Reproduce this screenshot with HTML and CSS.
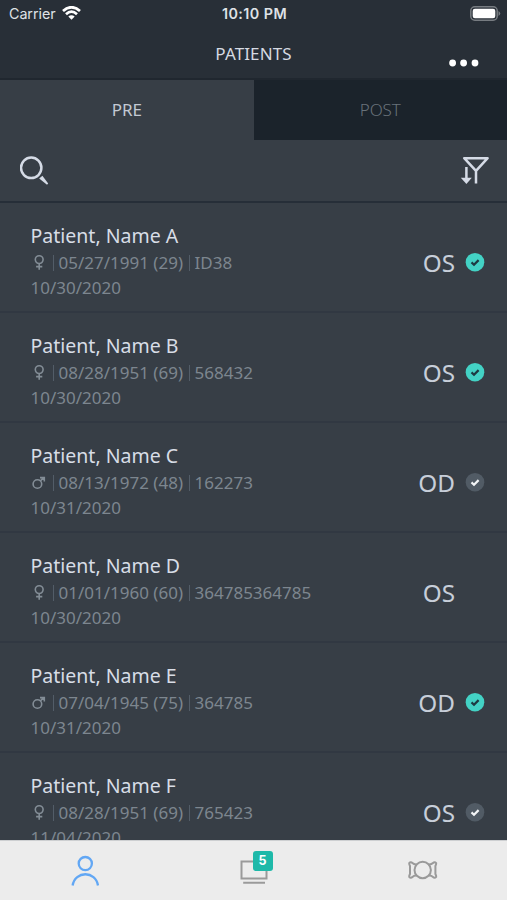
FILE: index.html
```html
<!DOCTYPE html>
<html lang="en">
<head>
<meta charset="utf-8">
<title>Patients</title>
<link rel="stylesheet" href="styles.css">
</head>
<body>
<svg class="defs" aria-hidden="true">
  <symbol id="female" viewBox="0 0 14 18"><circle cx="7.2" cy="5.6" r="3.9"/><path d="M7.2 9.5V15.8M4.1 12.6H10.3"/></symbol>
  <symbol id="male" viewBox="0 0 14 18"><circle cx="5.4" cy="10" r="4.3"/><path d="M8.4 6.9L11.8 3.7M8 3.6H12.3V7.6"/></symbol>
  <symbol id="check" viewBox="0 0 20 20"><circle cx="10" cy="10.2" r="9.3"/><path d="M6.5 10.4L9 12.7L13.6 8.1"/></symbol>
</svg>
<div class="screen">
  <div class="status">
    <div class="carrier"><span>Carrier</span>
      <svg class="wifi" width="19" height="14" viewBox="0 0 19 14"><path d="M1 5.1Q9.5-2.6 18 5.1M4 8.2Q9.5 3.2 15 8.2"/><path class="dot" d="M6.3 10.4Q9.5 7.9 12.7 10.4L9.5 13.8Z"/></svg>
    </div>
    <div class="clock">10:10 PM</div>
    <svg class="battery" width="31" height="15" viewBox="0 0 31 15"><rect class="shell" x=".8" y=".8" width="26.4" height="13.4" rx="4"/><rect class="charge" x="2.7" y="2.7" width="22.6" height="9.6" rx="2.2"/><path class="cap" d="M28.5 5Q32 7.5 28.5 10Z"/></svg>
  </div>
  <header class="header">
    <h1>PATIENTS</h1>
    <svg class="more" width="30" height="8" viewBox="0 0 30 8"><circle cx="3.6" cy="4" r="3.4"/><circle cx="14.6" cy="4" r="3.4"/><circle cx="26" cy="4" r="3.4"/></svg>
  </header>
  <nav class="tabs"><div class="tab active">PRE</div><div class="tab">POST</div></nav>
  <div class="tools">
    <svg width="30" height="30" viewBox="0 0 30 30"><circle cx="11.2" cy="11.8" r="10.2"/><path class="solid" d="M19.2 22.6L22.4 19.8L28.2 27.6L27 28.8Z"/></svg>
    <svg width="30" height="30" viewBox="0 0 30 30"><path d="M4.2 2.2H27.6L16 14.8ZM16 14.5V27.6M6.4 11V24"/><path class="solid" d="M.8 21.8H11.8L6.4 28Z"/></svg>
  </div>
  <main class="list">
    <article class="row">
      <div class="info"><h2>Patient, Name A</h2>
        <div class="meta"><svg class="sex"><use href="#female"/></svg><span>05/27/1991 (29)</span><span>ID38</span></div>
        <div class="date">10/30/2020</div></div>
      <div class="eye">OS</div><svg class="mark done"><use href="#check"/></svg>
    </article>
    <article class="row">
      <div class="info"><h2>Patient, Name B</h2>
        <div class="meta"><svg class="sex"><use href="#female"/></svg><span>08/28/1951 (69)</span><span>568432</span></div>
        <div class="date">10/30/2020</div></div>
      <div class="eye">OS</div><svg class="mark done"><use href="#check"/></svg>
    </article>
    <article class="row">
      <div class="info"><h2>Patient, Name C</h2>
        <div class="meta"><svg class="sex"><use href="#male"/></svg><span>08/13/1972 (48)</span><span>162273</span></div>
        <div class="date">10/31/2020</div></div>
      <div class="eye">OD</div><svg class="mark"><use href="#check"/></svg>
    </article>
    <article class="row">
      <div class="info"><h2>Patient, Name D</h2>
        <div class="meta"><svg class="sex"><use href="#female"/></svg><span>01/01/1960 (60)</span><span>364785364785</span></div>
        <div class="date">10/30/2020</div></div>
      <div class="eye">OS</div><div class="mark"></div>
    </article>
    <article class="row">
      <div class="info"><h2>Patient, Name E</h2>
        <div class="meta"><svg class="sex"><use href="#male"/></svg><span>07/04/1945 (75)</span><span>364785</span></div>
        <div class="date">10/31/2020</div></div>
      <div class="eye">OD</div><svg class="mark done"><use href="#check"/></svg>
    </article>
    <article class="row">
      <div class="info"><h2>Patient, Name F</h2>
        <div class="meta"><svg class="sex"><use href="#female"/></svg><span>08/28/1951 (69)</span><span>765423</span></div>
        <div class="date">11/04/2020</div></div>
      <div class="eye">OS</div><svg class="mark"><use href="#check"/></svg>
    </article>
  </main>
  <nav class="bottom">
    <div class="item current"><svg width="28" height="32" viewBox="0 0 28 32"><circle cx="14.3" cy="8.6" r="6.6"/><path d="M1.6 30.5C4 15.5 24.8 15.5 27 30.5"/></svg></div>
    <div class="item"><div class="monitor"><svg width="28" height="26" viewBox="0 0 28 26"><path d="M1.5 1.5H26.5V18.5H1.5ZM3.2 22.8H25"/></svg><span class="badge">5</span></div></div>
    <div class="item"><svg class="lens" width="30" height="20" viewBox="0 0 30 20"><circle cx="14.7" cy="10" r="8.2"/><path d="M8.6 4.4Q6 4.6 4.4 3T1.2 3.2Q1.1 4.2 2 6V14Q1.1 15.8 1.2 16.8Q2.8 18.6 4.4 17T8.6 15.6M20.8 4.4Q23.4 4.6 25 3T28.2 3.2Q28.3 4.2 27.4 6V14Q28.3 15.8 28.2 16.8Q26.6 18.6 25 17T20.8 15.6"/></svg></div>
  </nav>
</div>
</body>
</html>
```
FILE: styles.css
```css
* { box-sizing: border-box; }
body { margin: 0; font-family: "Noto Sans", sans-serif; background: #373e46; }
h1, h2 { margin: 0; font-weight: 400; }
svg { display: block; flex: none; fill: none; }
.defs { display: none; }
.screen { width: 507px; height: 900px; display: flex; flex-direction: column; overflow: hidden; }
.status { height: 28px; flex: none; padding: 0 6px 0 9px; background: #282f37; display: grid; grid-template-columns: 1fr auto 1fr; align-items: center; font-family: Inter, sans-serif; font-size: 14.3px; color: #dfe2e6; }
.carrier { display: flex; align-items: center; gap: 6px; margin-top: -1px; }
.carrier span { width: 47px; letter-spacing: -.05px; }
.wifi { stroke: #fff; stroke-width: 2.7; margin-top: -1px; }
.wifi .dot { fill: #fff; stroke: none; }
.clock { font-weight: 600; font-size: 14.3px; letter-spacing: .45px; margin: -1px 1px 0 0; }
.battery { justify-self: end; margin-top: -2px; }
.shell { stroke: #777c81; stroke-width: 1.5; }
.charge { fill: #fff; }
.cap { fill: #777c81; }
.header { height: 52px; flex: none; padding: 0 28px 0 0; background: #282f37; border-bottom: 2px solid #20272f; display: grid; grid-template-columns: 58px 1fr 30px; align-items: center; }
.header h1 { grid-column: 2; text-align: center; font-size: 17px; line-height: 52px; color: #d6dae2; letter-spacing: .1px; }
.more { fill: #fff; margin-top: 18px; }
.tabs { height: 60px; flex: none; display: flex; }
.tab { flex: 1; display: flex; align-items: center; justify-content: center; padding-bottom: 1px; font-size: 17px; font-weight: 300; letter-spacing: -.1px; color: #69727a; background: #1b232b; }
.tab.active { background: #373e46; color: #c3c9d3; font-weight: 400; }
.tools { height: 63px; flex: none; padding: 1px 17px 0 20px; border-bottom: 2px solid #262e38; display: flex; align-items: center; justify-content: space-between; stroke: #d5dbe6; stroke-width: 2.5; stroke-linejoin: round; }
.solid { fill: #d5dbe6; stroke: none; }
.list { flex: 1; min-height: 0; overflow: hidden; }
.row { height: 110px; padding: 19px 22px 0 30.5px; border-bottom: 2px solid #313842; display: flex; }
.info { flex: 1; color: #7d868f; font-size: 17px; line-height: 25px; }
.info h2 { font-size: 19.5px; line-height: 28px; color: #d8dde6; }
.meta { display: flex; align-items: center; }
.sex { width: 14px; height: 18px; margin: 0 7px 0 1px; stroke: #838d96; stroke-width: 1.6; }
.meta span { display: flex; align-items: center; }
.meta span::before { content: ""; width: 1px; height: 16px; background: #535d68; margin: 0 5px 0 0; }
.meta span + span { margin-left: 5.5px; }
.eye { font-size: 24.3px; line-height: 81px; color: #c7ced9; }
.mark { width: 20px; height: 20px; margin: 30px 0 0 10px; fill: #515b65; stroke: none; }
.mark.done { fill: #43d2c5; --tick: #1d3a42; }
#check path { fill: none; stroke: var(--tick, #f3f5f7); stroke-width: 2.2; }
.bottom { height: 60px; flex: none; background: #ececec; border-top: 1px solid #cdcfd1; display: flex; stroke: #9a9a9a; stroke-width: 2; }
.item { flex: 1; display: flex; align-items: center; justify-content: center; }
.current { stroke: #62a7f4; stroke-width: 2.3; }
.monitor { position: relative; margin-top: 4px; }
.lens { margin-top: -1px; }
.badge { position: absolute; left: 13px; top: -9px; width: 20px; height: 20px; border-radius: 3px; background: #1eb9a9; color: #fff; font: 700 12.5px/20px Inter, sans-serif; text-align: center; }
```
